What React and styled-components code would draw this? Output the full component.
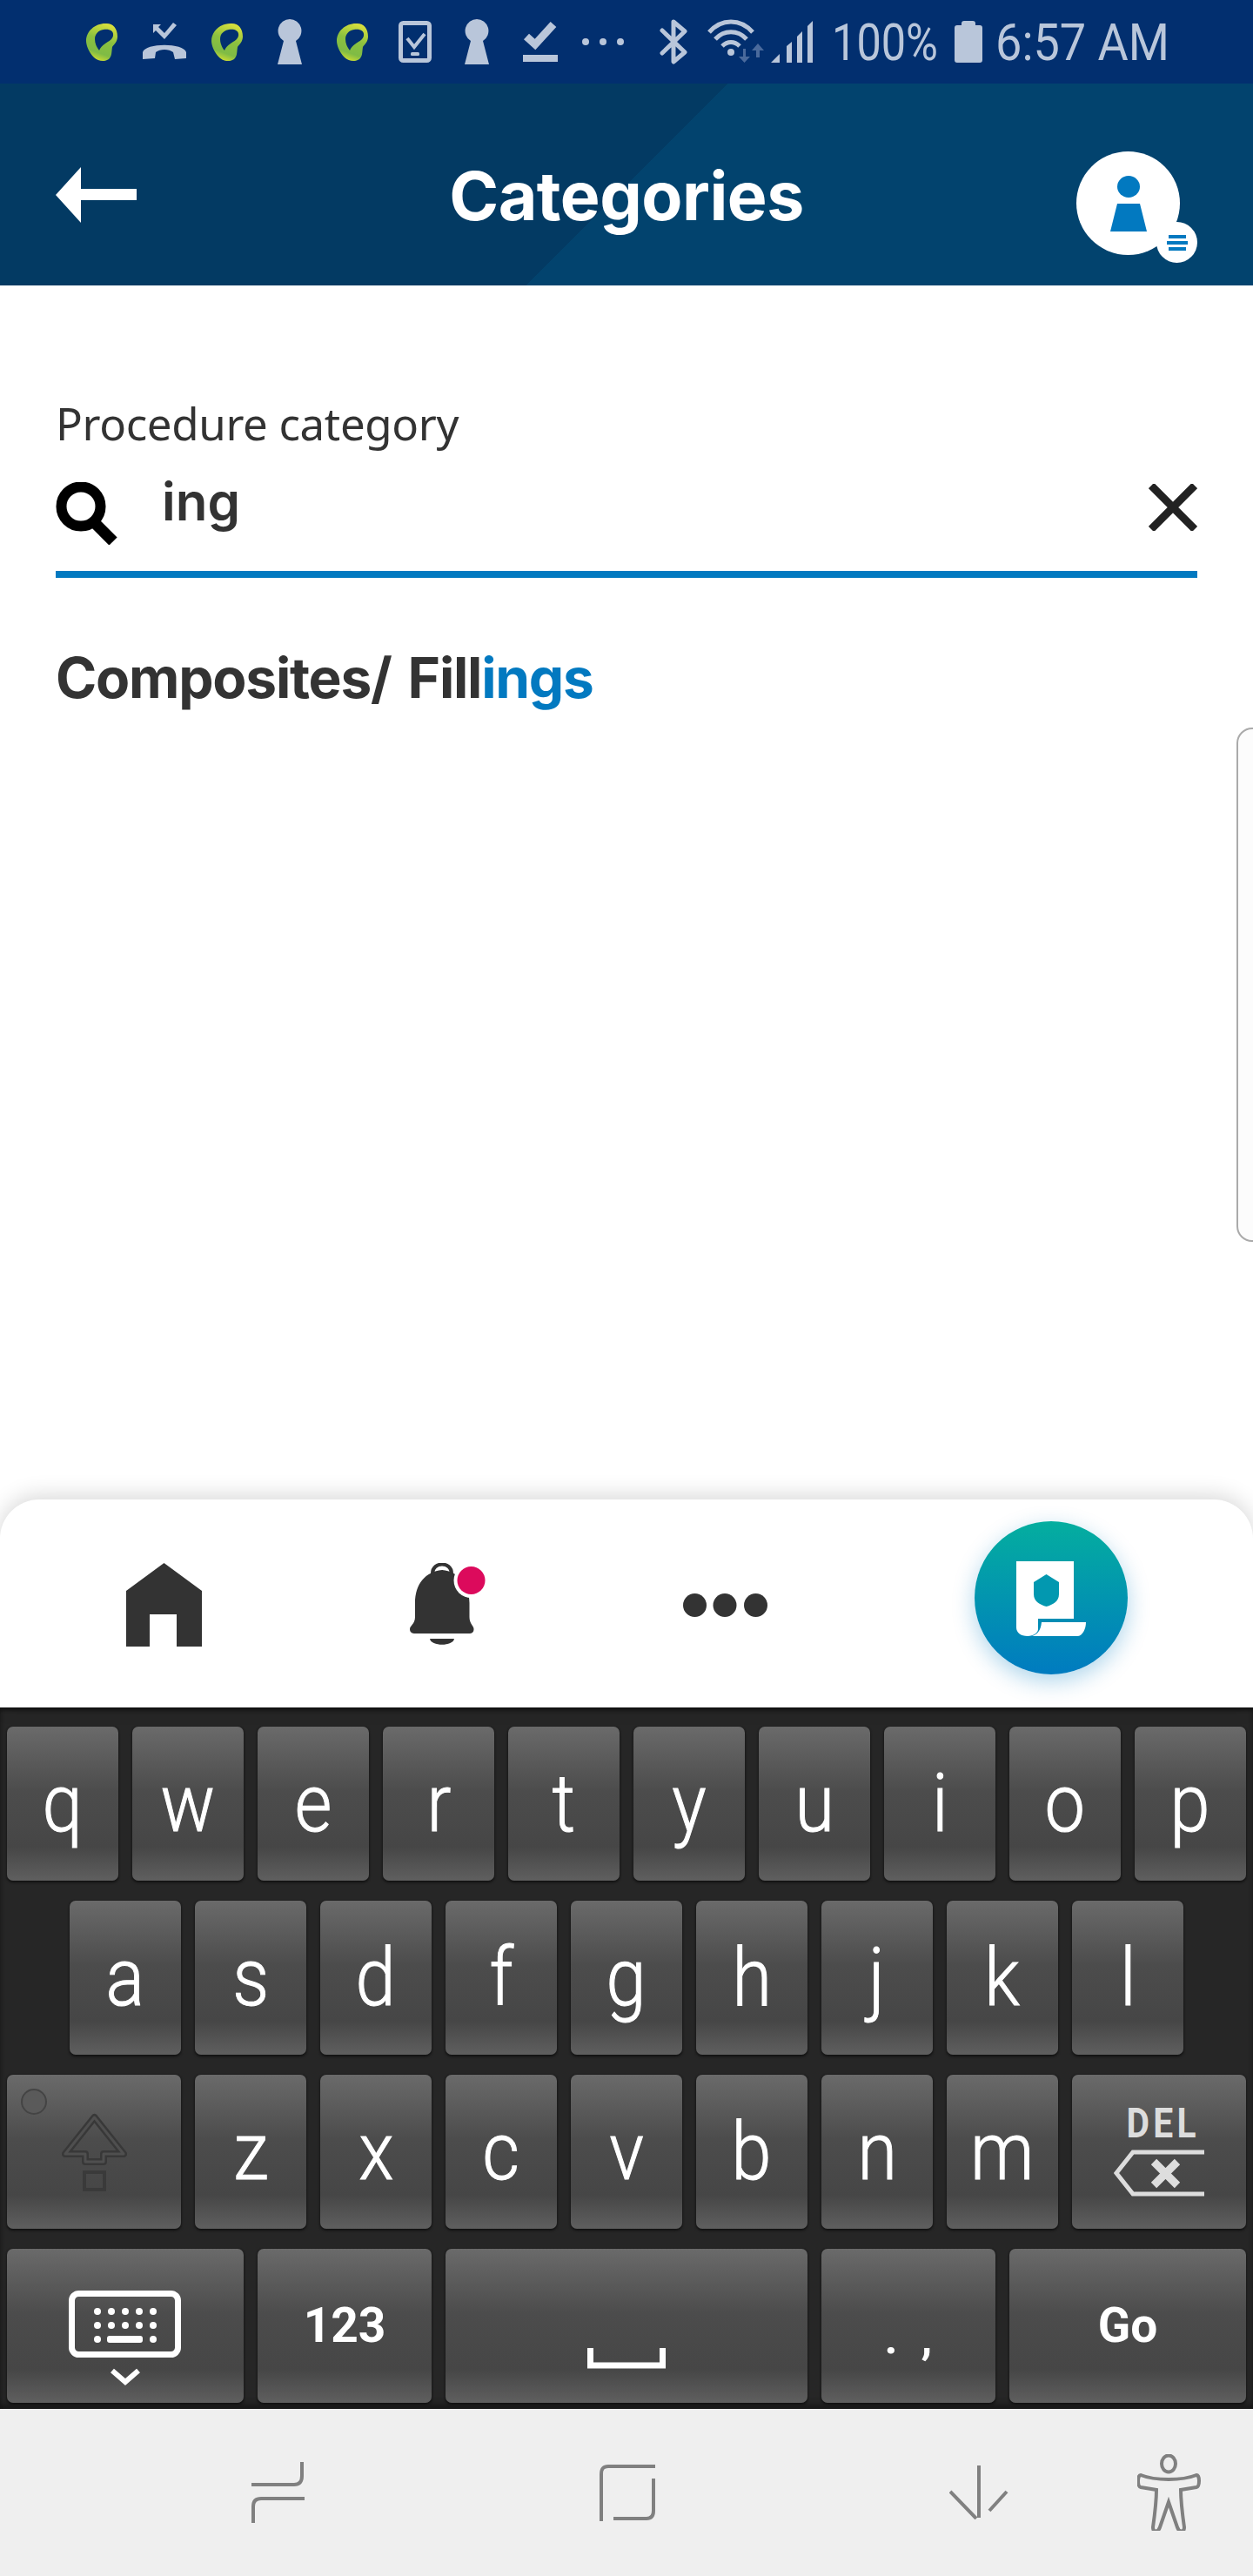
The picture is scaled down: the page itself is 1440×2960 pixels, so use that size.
import React from 'react';
import styled, { createGlobalStyle } from 'styled-components';

const GlobalStyle = createGlobalStyle`
  html, body {
    margin: 0;
    padding: 0;
    background: #fff;
  }
`

const Screen = styled.div`
  position: relative;
  width: 1440px;
  height: 2960px;
  display: flex;
  flex-direction: column;
  overflow: hidden;
  background: #fff;
`

const StatusBar = styled.div`
  height: 96px;
  flex: none;
  display: flex;
  padding-left: 99px;
  background: #022f6f;
  color: #b9c6da;
`

const StatusIcon = styled.svg`
  flex: none;
  height: 96px;
  margin-left: ${p => p.$left || 0}px;
  fill: #b9c6da;
`

const StatusText = styled.span`
  flex: none;
  display: flex;
  justify-content: center;
  width: ${p => p.$width}px;
  margin-left: ${p => p.$left}px;
  font: 400 60px/96px Roboto, sans-serif;
  white-space: nowrap;
  transform: translateY(1px) scaleX(${p => p.$scale});
`

const Header = styled.header`
  height: 232px;
  flex: none;
  box-sizing: border-box;
  display: grid;
  grid-template-columns: 1fr auto 1fr;
  align-items: center;
  padding: 24px 64px 0;
  background: linear-gradient(135deg, #033a63 50%, #02436e 50%);
`

const BackIcon = styled.svg`
  width: 93px;
  height: 64px;
  fill: #fff;
`

const Title = styled.h1`
  margin: 3px 0 0;
  font: 700 77px/1 Inter, sans-serif;
  letter-spacing: -0.5px;
  color: #fff;
`

const Avatar = styled.div`
  position: relative;
  justify-self: end;
  width: 119px;
  height: 119px;
  margin: 19px 20px 0 0;
  border-radius: 50%;
  background: #fff;
  display: flex;
  align-items: center;
  justify-content: center;
`

const AvatarBadge = styled.span`
  position: absolute;
  right: -20px;
  bottom: -9px;
  width: 47px;
  height: 47px;
  border-radius: 50%;
  background: #fff;
  display: flex;
  flex-direction: column;
  align-items: center;
  justify-content: center;
  gap: 3px;
`

const BadgeLine = styled.i`
  display: block;
  width: ${p => p.$width}px;
  height: 4px;
  background: #0279c0;
`

const Content = styled.main`
  flex: 1;
  min-height: 0;
  padding: 125px 64px 0;
`

const FieldLabel = styled.label`
  display: block;
  margin-bottom: 20px;
  font: 400 51px/66px "Noto Sans", sans-serif;
  letter-spacing: -0.35px;
  color: #333;
`

const SearchRow = styled.div`
  height: 117px;
  display: flex;
  align-items: flex-start;
  border-bottom: 8px solid #0279c0;
`

const SearchIcon = styled.svg`
  flex: none;
  width: 72px;
  height: 72px;
  margin-top: 15px;
`

const SearchText = styled.span`
  margin: 1px 0 0 50px;
  font: 600 60px/72px Inter, sans-serif;
  color: #333;
`

const ClearIcon = styled.svg`
  flex: none;
  width: 56px;
  height: 54px;
  margin: 17px 0 0 auto;
`

const Result = styled.div`
  margin-top: 75px;
  font: 700 64px/80px Inter, sans-serif;
  letter-spacing: -1.25px;
  word-spacing: 5px;
  color: #333;

  em {
    font-style: normal;
    color: #0279c0;
  }
`

const EdgeHandle = styled.div`
  position: absolute;
  top: 836px;
  right: -20px;
  width: 35px;
  height: 587px;
  border: 2px solid #aaa;
  border-radius: 18px;
  background: #fcfcfc;
`

const BottomNav = styled.nav`
  position: relative;
  height: 236px;
  flex: none;
  padding-top: 3px;
  display: flex;
  align-items: center;
  padding-left: 145px;
  border-radius: 45px 45px 0 0;
  background: #fff;
  box-shadow: 0 -4px 26px rgba(0, 0, 0, 0.16);
`

const NavIcon = styled.svg`
  flex: none;
  margin-left: ${p => p.$left || 0}px;
  fill: #333;
`

const Fab = styled.button`
  flex: none;
  width: 176px;
  height: 176px;
  margin: 0 0 16px 238px;
  padding: 0;
  border: 0;
  border-radius: 50%;
  background: linear-gradient(180deg, #04ae9f 0%, #007bc0 100%);
  box-shadow: 0 8px 26px rgba(0, 123, 192, 0.32);
  display: flex;
  align-items: center;
  justify-content: center;
`

const Keyboard = styled.div`
  height: 806px;
  flex: none;
  box-sizing: border-box;
  padding: 22px 8px 0;
  display: flex;
  flex-direction: column;
  gap: 23px;
  background: #262626;
  box-shadow: inset 0 4px 4px -1px #111, inset 0 -8px 8px -4px #151515;
`

const KeyRow = styled.div`
  display: flex;
  gap: 16px;
  padding-left: ${p => p.$indent || 0}px;
`

const Key = styled.div`
  position: relative;
  flex: none;
  box-sizing: border-box;
  width: ${p => p.$width || 128}px;
  height: 177px;
  display: flex;
  flex-direction: column;
  align-items: center;
  justify-content: center;
  border-radius: 7px;
  background: linear-gradient(180deg, #6a6a6a 0%, #4c4c4c 42%, #464646 78%, #5f5f5f 100%);
  box-shadow: 0 2px 3px #111, 0 0 2px #181818;
  color: #fff;
`

const KeyLabel = styled.span`
  font: 300 92px/1 Roboto, sans-serif;
  -webkit-text-stroke: 1px #fff;
  transform: scaleX(0.9);
`

const KeyAction = styled.span`
  font: 700 55px/1 Roboto, sans-serif;
`

const Punctuation = styled.span`
  margin-top: 28px;
  font: 700 52px/1 Roboto, sans-serif;
  word-spacing: 14px;
`

const DelLabel = styled.span`
  margin-left: 10px;
  font: 700 48px/36px Roboto, sans-serif;
  letter-spacing: 5px;
  color: #ddd;
  transform: scaleX(0.85);
`

const ShiftDot = styled.i`
  position: absolute;
  top: 16px;
  left: 16px;
  width: 26px;
  height: 26px;
  border: 2px solid #444;
  border-radius: 50%;
  background: #5a5a5a;
`

const KeyIcon = styled.svg`
  display: block;
  margin-top: ${p => p.$top || 0}px;
`

const SystemNav = styled.div`
  height: 192px;
  flex: none;
  display: flex;
  align-items: center;
  padding-left: 289px;
  background: #efefef;
`

const SystemIcon = styled.svg`
  flex: none;
  margin-left: ${p => p.$left || 0}px;
  fill: none;
  stroke: #808080;
  stroke-width: 4;
`

const EarLogo = ({ left, id }) => (
  <StatusIcon width="36" viewBox="0 0 36 96" $left={left}>
    <defs>
      <linearGradient id={id} x1="0.7" y1="0" x2="0.4" y2="1">
        <stop offset="0" stopColor="#dde23c" />
        <stop offset="0.45" stopColor="#8cc13f" />
        <stop offset="0.8" stopColor="#7fbb45" />
        <stop offset="1" stopColor="#cbdc33" />
      </linearGradient>
    </defs>
    <path
      fill={`url(#${id})`}
      d="M22 27C30 26 36 32 36 42C36 48 32 51 30 54C29 60 30 64 26 68C22 71 14 71 9 66C3 60 0 52 0 47C0 36 10 27 22 27Z"
    />
    <path fill="#022f6f" d="M20 34C26 33 32 35 31 41C30 46 26 47 22 50C18 53 16 55 15 58C12 54 10 50 10 45C10 39 14 35 20 34Z" />
  </StatusIcon>
)

const Keyhole = ({ left }) => (
  <StatusIcon width="28" viewBox="0 0 28 96" $left={left}>
    <path d="M14 22A13.5 13.5 0 0 1 21 47L28 74L0 74L7 47A13.5 13.5 0 0 1 14 22Z" />
  </StatusIcon>
)

const StatusIcons = () => (
  <>
    <EarLogo id="ear-a" />
    <StatusIcon width="50" viewBox="0 0 50 96" $left={29}>
      <path d="M0 68L0 60C3 49 47 49 50 60L50 67L37 68L35 60C30 56 20 56 15 60L14 67Z" />
      <path d="M12 28L21 28L18 31L25 38L35 26L39 29L25 45L15 35L12 38Z" />
    </StatusIcon>
    <EarLogo id="ear-b" left={29} />
    <Keyhole left={40} />
    <EarLogo id="ear-c" left={40} />
    <StatusIcon width="38" viewBox="0 0 38 96" $left={35}>
      <rect x="2.5" y="26.5" width="33" height="43" rx="3" fill="none" stroke="#b9c6da" strokeWidth="5" />
      <path d="M10 44L18 54L30 39" fill="none" stroke="#b9c6da" strokeWidth="4" />
      <rect x="14" y="60" width="10" height="4" rx="1.5" />
    </StatusIcon>
    <Keyhole left={38} />
    <StatusIcon width="40" viewBox="0 0 40 96" $left={39}>
      <path d="M4 42L14 51L35 28" fill="none" stroke="#b9c6da" strokeWidth="9" />
      <rect x="0" y="63" width="40" height="8" />
    </StatusIcon>
    <StatusIcon width="48" viewBox="0 0 48 96" $left={28}>
      <circle cx="4" cy="48" r="4" />
      <circle cx="24" cy="48" r="4" />
      <circle cx="44" cy="48" r="4" />
    </StatusIcon>
    <StatusIcon width="32" viewBox="0 0 32 96" $left={41}>
      <path
        d="M3 35L29 60L16 71L16 25L29 36L3 61"
        fill="none"
        stroke="#b9c6da"
        strokeWidth="5"
        strokeLinejoin="round"
        strokeLinecap="round"
      />
    </StatusIcon>
    <StatusIcon width="65" viewBox="0 0 65 96" $left={23}>
      <g fill="none" stroke="#b9c6da" strokeWidth="5">
        <path d="M2 37C16 21 38 21 52 37" />
        <path d="M9 45C19 34 35 34 45 45" />
        <path d="M17 53C23 47 31 47 37 53" />
      </g>
      <circle cx="27" cy="60" r="4" />
      <path fill="#4a6a9c" d="M41 56H44V65H49L42.5 72L36 65H41Z" />
      <path fill="#4a6a9c" d="M58 50L65 58H60V66H56V58H51Z" />
    </StatusIcon>
    <StatusIcon width="48" viewBox="0 0 48 96" $left={8}>
      <path d="M0 72L10 62V72Z" />
      <path d="M18 72V53L24 48V72Z" />
      <path d="M30 72V42L36 36V72Z" />
      <path d="M42 72V30L48 24V72Z" />
    </StatusIcon>
    <StatusText $width={122} $left={22} $scale={0.84}>100%</StatusText>
    <StatusIcon width="32" viewBox="0 0 32 96" $left={19}>
      <path d="M8 27C8 25 9 24 11 24H21C23 24 24 25 24 27V29H29C31 29 32 30 32 32V69C32 71 31 72 29 72H3C1 72 0 71 0 69V32C0 30 1 29 3 29H8Z" />
    </StatusIcon>
    <StatusText $width={192} $left={19} $scale={0.9}>6:57 AM</StatusText>
  </>
)

const topRow = ['q', 'w', 'e', 'r', 't', 'y', 'u', 'i', 'o', 'p']
const homeRow = ['a', 's', 'd', 'f', 'g', 'h', 'j', 'k', 'l']
const bottomRow = ['z', 'x', 'c', 'v', 'b', 'n', 'm']

const LetterKey = ({ letter }) => (
  <Key>
    <KeyLabel>{letter}</KeyLabel>
  </Key>
)

const App = () => {
  return (
    <Screen>
      <GlobalStyle />
      <StatusBar>
        <StatusIcons />
      </StatusBar>

      <Header>
        <BackIcon viewBox="0 0 93 64">
          <path d="M0 32L29 0V25H93V38H29V64Z" />
        </BackIcon>
        <Title>Categories</Title>
        <Avatar>
          <svg width="42" height="64" viewBox="0 0 42 64" fill="#0279c0">
            <ellipse cx="21" cy="12.5" rx="13" ry="12.5" />
            <path d="M8 32H34L42 64H0Z" />
          </svg>
          <AvatarBadge>
            <BadgeLine $width={20} />
            <BadgeLine $width={24} />
            <BadgeLine $width={20} />
          </AvatarBadge>
        </Avatar>
      </Header>

      <Content>
        <FieldLabel>Procedure category</FieldLabel>
        <SearchRow>
          <SearchIcon viewBox="0 0 72 72" fill="none" stroke="#000">
            <circle cx="29" cy="28" r="22.5" strokeWidth="12" />
            <path d="M44 46L66 68" strokeWidth="13" />
          </SearchIcon>
          <SearchText>ing</SearchText>
          <ClearIcon viewBox="0 0 56 54" stroke="#222" strokeWidth="9">
            <path d="M3 2L53 52M53 2L3 52" />
          </ClearIcon>
        </SearchRow>
        <Result>Composites/ Fill<em>ings</em></Result>
      </Content>

      <EdgeHandle />

      <BottomNav>
        <NavIcon width="87" height="96" viewBox="0 0 87 96">
          <path d="M43.5 0L87 32V96H58V59H27V96H0V32Z" />
        </NavIcon>
        <NavIcon width="87" height="96" viewBox="0 0 87 96" $left={239}>
          <path d="M26 12C26 -2 48 -2 48 12" fill="none" stroke="#333" strokeWidth="4" />
          <path d="M37 8C18 10 6 24 6 46L6 62C6 70 0 72 0 76C0 80 3 81 6 81L68 81C71 81 73.5 80 73.5 76C73.5 72 68.5 70 68.5 62L68.5 46C68.5 24 56 10 37 8Z" />
          <path d="M23 87H51C50 96 24 96 23 87Z" />
          <circle cx="70.5" cy="20" r="20" fill="#fff" />
          <circle cx="70.5" cy="20" r="16" fill="#dc0a5c" />
        </NavIcon>
        <NavIcon width="97" height="27" viewBox="0 0 97 27" $left={227}>
          <circle cx="13.5" cy="13.5" r="13.5" />
          <circle cx="48" cy="13.5" r="13.5" />
          <circle cx="83.5" cy="13.5" r="13.5" />
        </NavIcon>
        <Fab>
          <svg width="80" height="86" viewBox="0 0 80 86" fill="#fff" style={{ marginTop: 2 }}>
            <path d="M0 0H66V66H25V78C25 82 20 86 13 86C5 86 0 82 0 76Z" />
            <path d="M29 70H80C80 78 76 86 70 86H18C24 84 28 80 29 70Z" />
            <path d="M34.5 15L49 24V38C49 46 42 50 34.5 52C27 50 20 46 20 38V24Z" fill="#0298b0" />
          </svg>
        </Fab>
      </BottomNav>

      <Keyboard>
        <KeyRow>
          {topRow.map(letter => <LetterKey key={letter} letter={letter} />)}
        </KeyRow>
        <KeyRow $indent={72}>
          {homeRow.map(letter => <LetterKey key={letter} letter={letter} />)}
        </KeyRow>
        <KeyRow>
          <Key $width={200}>
            <ShiftDot />
            <KeyIcon width="75" height="90" viewBox="0 0 75 90" fill="none">
              <path d="M37.5 5L71 47H48V56H27V47H4Z" stroke="#383838" strokeWidth="8" strokeLinejoin="round" />
              <path d="M37.5 5L71 47H48V56H27V47H4Z" stroke="#4f4f4f" strokeWidth="3" strokeLinejoin="round" />
              <rect x="26" y="68" width="23" height="20" stroke="#3a3a3a" strokeWidth="4" />
            </KeyIcon>
          </Key>
          {bottomRow.map(letter => <LetterKey key={letter} letter={letter} />)}
          <Key $width={200}>
            <DelLabel>DEL</DelLabel>
            <KeyIcon width="104" height="54" viewBox="0 0 104 54" $top={12} fill="none" stroke="#ddd">
              <path d="M104 3H22L3 27L22 51H104" strokeWidth="5" />
              <path d="M46 14L73 41M73 14L46 41" strokeWidth="9" />
            </KeyIcon>
          </Key>
        </KeyRow>
        <KeyRow>
          <Key $width={272}>
            <KeyIcon width="130" height="110" viewBox="0 0 130 110" $top={29} fill="#fff">
              <rect x="3.5" y="3.5" width="122" height="70" rx="8" fill="none" stroke="#fff" strokeWidth="7" />
              {[24, 40, 56].map(y =>
                [33, 49, 65, 81, 97].map(x =>
                  y === 56 && x > 33 && x < 97
                    ? null
                    : <circle key={`${x}-${y}`} cx={x} cy={y} r="4" />
                )
              )}
              <rect x="44" y="52" width="41" height="8" rx="3" />
              <path d="M50 92L65 105L80 92" fill="none" stroke="#fff" strokeWidth="6" />
            </KeyIcon>
          </Key>
          <Key $width={200}>
            <KeyAction>123</KeyAction>
          </Key>
          <Key $width={416}>
            <KeyIcon width="90" height="24" viewBox="0 0 90 24" $top={75} fill="none" stroke="#fff" strokeWidth="7">
              <path d="M3.5 0V20H86.5V0" />
            </KeyIcon>
          </Key>
          <Key $width={200}>
            <Punctuation>. ,</Punctuation>
          </Key>
          <Key $width={272}>
            <KeyAction>Go</KeyAction>
          </Key>
        </KeyRow>
      </Keyboard>

      <SystemNav>
        <SystemIcon width="61" height="70" viewBox="0 0 61 70">
          <path d="M58 0V16C58 23 55 26 49 26H0" />
          <path d="M61 42H11C5 42 2 45 2 51V70" />
        </SystemIcon>
        <SystemIcon width="64" height="66" viewBox="0 0 64 66" $left={339}>
          <path d="M64 3H10C4 3 2 6 2 12V66" />
          <path d="M62 17V54C62 60 59 63 54 63H16" />
        </SystemIcon>
        <SystemIcon width="68" height="62" viewBox="0 0 68 62" $left={338}>
          <path d="M34 0V60M1 30L31 61M66 30L46 52" />
        </SystemIcon>
        <SystemIcon width="73" height="88" viewBox="0 0 73 88" $left={148}>
          <ellipse cx="36" cy="11" rx="8" ry="9.5" />
          <path d="M4 24C14 28 26 29 36 29C46 29 58 28 68 24C72 24 72 37 68 38L50 41C50 55 52 70 54 84C54 90 48 90 46 84L36 55L26 84C24 90 18 90 18 84C20 70 22 55 22 41L4 38C0 37 0 24 4 24Z" />
        </SystemIcon>
      </SystemNav>
    </Screen>
  )
}

export default App;
